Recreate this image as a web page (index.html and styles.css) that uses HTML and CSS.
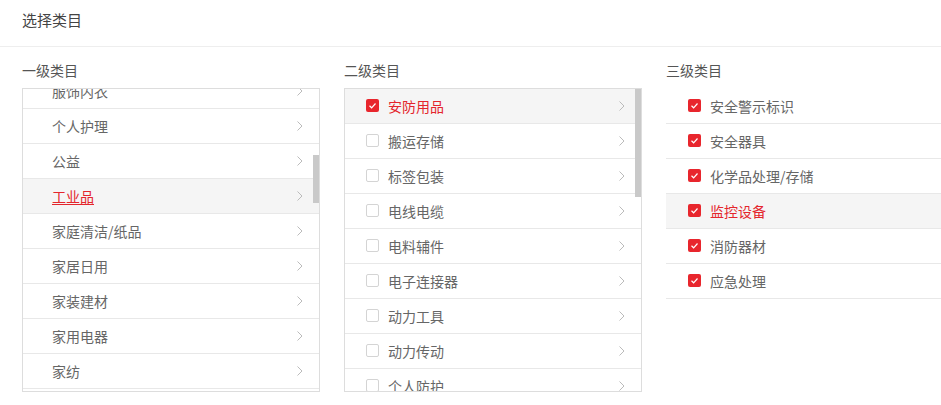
FILE: index.html
```html
<!DOCTYPE html>
<html lang="zh-CN">
<head>
<meta charset="utf-8">
<title>选择类目</title>
<link rel="stylesheet" href="styles.css">
</head>
<body>
<div class="page">
  <div class="header">选择类目</div>
  <div class="columns">
    <section class="col col-box">
      <div class="col-title">一级类目</div>
      <div class="box">
        <ul class="list list-scrolled">
          <li class="row"><span class="label">服饰内衣</span><svg class="arrow" viewBox="0 0 6 10"><polyline points="0.5,0.5 5,5 0.5,9.5"/></svg></li>
          <li class="row"><span class="label">个人护理</span><svg class="arrow" viewBox="0 0 6 10"><polyline points="0.5,0.5 5,5 0.5,9.5"/></svg></li>
          <li class="row"><span class="label">公益</span><svg class="arrow" viewBox="0 0 6 10"><polyline points="0.5,0.5 5,5 0.5,9.5"/></svg></li>
          <li class="row active"><span class="label underline">工业品</span><svg class="arrow" viewBox="0 0 6 10"><polyline points="0.5,0.5 5,5 0.5,9.5"/></svg></li>
          <li class="row"><span class="label">家庭清洁/纸品</span><svg class="arrow" viewBox="0 0 6 10"><polyline points="0.5,0.5 5,5 0.5,9.5"/></svg></li>
          <li class="row"><span class="label">家居日用</span><svg class="arrow" viewBox="0 0 6 10"><polyline points="0.5,0.5 5,5 0.5,9.5"/></svg></li>
          <li class="row"><span class="label">家装建材</span><svg class="arrow" viewBox="0 0 6 10"><polyline points="0.5,0.5 5,5 0.5,9.5"/></svg></li>
          <li class="row"><span class="label">家用电器</span><svg class="arrow" viewBox="0 0 6 10"><polyline points="0.5,0.5 5,5 0.5,9.5"/></svg></li>
          <li class="row"><span class="label">家纺</span><svg class="arrow" viewBox="0 0 6 10"><polyline points="0.5,0.5 5,5 0.5,9.5"/></svg></li>
          <li class="row"><span class="label">酒类</span><svg class="arrow" viewBox="0 0 6 10"><polyline points="0.5,0.5 5,5 0.5,9.5"/></svg></li>
        </ul>
        <div class="thumb thumb-1"></div>
      </div>
    </section>

    <section class="col col-box">
      <div class="col-title">二级类目</div>
      <div class="box">
        <ul class="list">
          <li class="row active"><span class="check on"><svg viewBox="0 0 13 13"><polyline points="3.5,6.8 5.6,8.8 9.5,4.5"/></svg></span><span class="label">安防用品</span><svg class="arrow" viewBox="0 0 6 10"><polyline points="0.5,0.5 5,5 0.5,9.5"/></svg></li>
          <li class="row"><span class="check"></span><span class="label">搬运存储</span><svg class="arrow" viewBox="0 0 6 10"><polyline points="0.5,0.5 5,5 0.5,9.5"/></svg></li>
          <li class="row"><span class="check"></span><span class="label">标签包装</span><svg class="arrow" viewBox="0 0 6 10"><polyline points="0.5,0.5 5,5 0.5,9.5"/></svg></li>
          <li class="row"><span class="check"></span><span class="label">电线电缆</span><svg class="arrow" viewBox="0 0 6 10"><polyline points="0.5,0.5 5,5 0.5,9.5"/></svg></li>
          <li class="row"><span class="check"></span><span class="label">电料辅件</span><svg class="arrow" viewBox="0 0 6 10"><polyline points="0.5,0.5 5,5 0.5,9.5"/></svg></li>
          <li class="row"><span class="check"></span><span class="label">电子连接器</span><svg class="arrow" viewBox="0 0 6 10"><polyline points="0.5,0.5 5,5 0.5,9.5"/></svg></li>
          <li class="row"><span class="check"></span><span class="label">动力工具</span><svg class="arrow" viewBox="0 0 6 10"><polyline points="0.5,0.5 5,5 0.5,9.5"/></svg></li>
          <li class="row"><span class="check"></span><span class="label">动力传动</span><svg class="arrow" viewBox="0 0 6 10"><polyline points="0.5,0.5 5,5 0.5,9.5"/></svg></li>
          <li class="row"><span class="check"></span><span class="label">个人防护</span><svg class="arrow" viewBox="0 0 6 10"><polyline points="0.5,0.5 5,5 0.5,9.5"/></svg></li>
          <li class="row"><span class="check"></span><span class="label">工具配件</span><svg class="arrow" viewBox="0 0 6 10"><polyline points="0.5,0.5 5,5 0.5,9.5"/></svg></li>
        </ul>
        <div class="thumb thumb-2"></div>
      </div>
    </section>

    <section class="col col-plain">
      <div class="col-title">三级类目</div>
      <ul class="list list-plain">
        <li class="row"><span class="check on"><svg viewBox="0 0 13 13"><polyline points="3.5,6.8 5.6,8.8 9.5,4.5"/></svg></span><span class="label">安全警示标识</span></li>
        <li class="row"><span class="check on"><svg viewBox="0 0 13 13"><polyline points="3.5,6.8 5.6,8.8 9.5,4.5"/></svg></span><span class="label">安全器具</span></li>
        <li class="row"><span class="check on"><svg viewBox="0 0 13 13"><polyline points="3.5,6.8 5.6,8.8 9.5,4.5"/></svg></span><span class="label">化学品处理/存储</span></li>
        <li class="row active"><span class="check on"><svg viewBox="0 0 13 13"><polyline points="3.5,6.8 5.6,8.8 9.5,4.5"/></svg></span><span class="label">监控设备</span></li>
        <li class="row"><span class="check on"><svg viewBox="0 0 13 13"><polyline points="3.5,6.8 5.6,8.8 9.5,4.5"/></svg></span><span class="label">消防器材</span></li>
        <li class="row"><span class="check on"><svg viewBox="0 0 13 13"><polyline points="3.5,6.8 5.6,8.8 9.5,4.5"/></svg></span><span class="label">应急处理</span></li>
      </ul>
    </section>
  </div>
</div>
</body>
</html>
```

FILE: styles.css
```css
* {
  box-sizing: border-box;
}

html, body {
  margin: 0;
  padding: 0;
  background: #fff;
  overflow: hidden;
}

body {
  font-family: "Microsoft YaHei", "Noto Sans CJK SC", "Noto Sans", sans-serif;
  color: #666;
  font-size: 14px;
}

.page {
  width: 941px;
  height: 405px;
  overflow: hidden;
}

.header {
  height: 47px;
  line-height: 40px;
  padding: 0 22px;
  font-size: 15px;
  color: #444;
  border-bottom: 1px solid #eee;
}

.columns {
  display: flex;
  gap: 24px;
  padding: 13px 0 0 22px;
}

.col-box {
  flex: 0 0 298px;
}

.col-plain {
  flex: 1 1 auto;
}

.col-title {
  height: 20px;
  line-height: 20px;
  margin-bottom: 8px;
  font-size: 14px;
  color: #555;
}

.box {
  position: relative;
  height: 304px;
  border: 1px solid #ddd;
  overflow: hidden;
}

.list {
  list-style: none;
  margin: 0;
  padding: 0;
}

.list-scrolled {
  margin-top: -15px;
}

.list-plain {
  border-top: 1px solid transparent;
}

.row {
  display: flex;
  align-items: center;
  height: 35px;
  border-bottom: 1px solid #e8e8e8;
  padding: 0 16px 1px 21px;
  line-height: 34px;
}

.col-plain .row {
  padding-left: 22px;
}

.list-scrolled .row {
  padding-left: 29px;
}

.row.active {
  background: #f5f5f5;
}

.row.active .label {
  color: #e4262d;
}

.label {
  flex: 1 1 auto;
  white-space: nowrap;
}

.label.underline {
  text-decoration: underline;
  text-underline-offset: 2px;
}

.arrow {
  flex: 0 0 6px;
  width: 6px;
  height: 10px;
  fill: none;
  stroke: #bbb;
  stroke-width: 1;
}

.check {
  flex: 0 0 13px;
  width: 13px;
  height: 13px;
  margin-right: 9px;
  border: 1px solid #d4d4d4;
  border-radius: 2px;
  background: #fff;
  display: flex;
}

.check.on {
  border: none;
  background: #e8262d;
}

.check svg {
  width: 13px;
  height: 13px;
  fill: none;
  stroke: #fff;
  stroke-width: 1.2;
}

.thumb {
  position: absolute;
  right: 0;
  width: 6px;
  background: #c9c9c9;
}

.thumb-1 {
  top: 66px;
  height: 48px;
}

.thumb-2 {
  top: 0;
  height: 108px;
}
```
